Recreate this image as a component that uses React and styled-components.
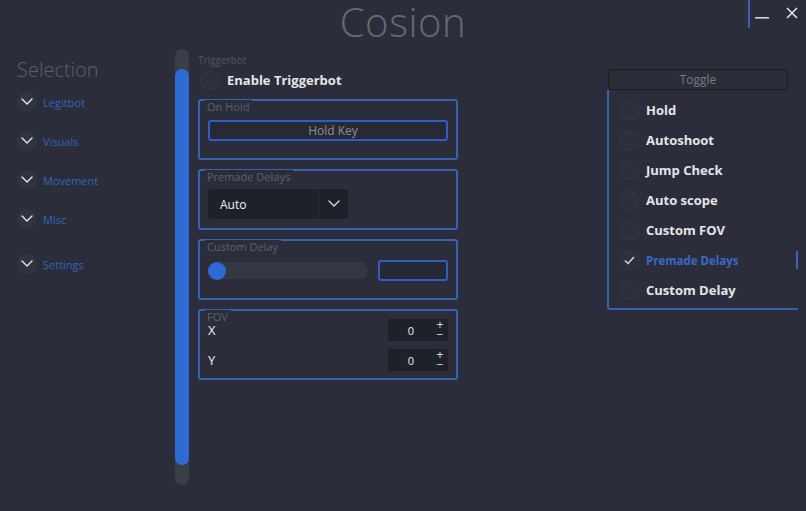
import React, { useState } from 'react';
import styled, { createGlobalStyle } from 'styled-components';

const GlobalStyle = createGlobalStyle`
  html, body {
    margin: 0;
    padding: 0;
    background: #2b2e3a;
  }
  body {
    font-family: "Open Sans", "Noto Sans", sans-serif;
  }
`;

const Window = styled.div`
  width: 806px;
  height: 511px;
  background: #2b2e3a;
  display: flex;
  flex-direction: column;
  overflow: hidden;
`;

const TitleBar = styled.div`
  height: 50px;
  display: grid;
  grid-template-columns: 1fr auto 1fr;
`;

const Title = styled.h1`
  grid-column: 2;
  margin: 0;
  padding-top: 1px;
  font-size: 40px;
  font-weight: 300;
  line-height: 42px;
  color: #646977;
  letter-spacing: 0.6px;
`;

const Controls = styled.div`
  grid-column: 3;
  justify-self: end;
  display: flex;
  align-items: flex-start;
  height: 28px;
  padding-right: 8px;
`;

const ControlDivider = styled.span`
  width: 2px;
  height: 28px;
  background: #3c62b4;
`;

const ControlButton = styled.button`
  border: 0;
  background: transparent;
  padding: 0;
  margin-left: ${(p) => p.$gap}px;
  margin-top: ${(p) => p.$top}px;
  width: ${(p) => p.$size}px;
  height: ${(p) => p.$size}px;
  display: flex;
  cursor: pointer;
`;

const Body = styled.div`
  flex: 1;
  display: flex;
  align-items: flex-start;
`;

const Sidebar = styled.nav`
  width: 175px;
  padding: 7px 0 0 17px;
  box-sizing: border-box;
`;

const SidebarTitle = styled.div`
  font-size: 20px;
  font-weight: 300;
  line-height: 25px;
  color: #5a5f6c;
  margin-bottom: 10px;
`;

const NavList = styled.div`
  display: flex;
  flex-direction: column;
`;

const NavItem = styled.a`
  display: flex;
  align-items: center;
  gap: 6px;
  height: 20px;
  margin-bottom: ${(p) => p.$space}px;
  cursor: pointer;
`;

const NavCircle = styled.span`
  width: 20px;
  height: 20px;
  border-radius: 50%;
  background: #30343f;
  display: flex;
  align-items: center;
  justify-content: center;
`;

const NavText = styled.span`
  font-size: 11px;
  color: #3562b8;
`;

const ScrollTrack = styled.div`
  width: 14px;
  height: 436px;
  margin-top: -1px;
  border-radius: 7px;
  background: #3a3e49;
  padding: 20px 0;
  box-sizing: border-box;
  display: flex;
`;

const ScrollThumb = styled.div`
  flex: 1;
  border-radius: 7px;
  background: #2e6bd3;
`;

const Content = styled.section`
  width: 260px;
  margin-left: 9px;
  display: flex;
  flex-direction: column;
`;

const SectionLabel = styled.div`
  font-size: 10px;
  line-height: 12px;
  color: #4f5461;
  margin-top: 4px;
`;

const EnableRow = styled.label`
  display: flex;
  align-items: center;
  gap: 8px;
  height: 20px;
  margin: 4px 0 9px 2px;
  cursor: pointer;
`;

const RadioCircle = styled.span`
  width: 17px;
  height: 17px;
  border-radius: 50%;
  border: 1px solid #363a46;
  background: #2d303c;
  flex-shrink: 0;
  display: flex;
  align-items: center;
  justify-content: center;
`;

const BoldText = styled.span`
  font-weight: 700;
  color: ${(p) => (p.$active ? '#3a68c8' : '#e4e5e8')};
  font-size: ${(p) => (p.$active ? '11.5px' : '13px')};
`;

const GroupBox = styled.fieldset`
  margin: 0 0 9px;
  padding: 0 8px;
  height: ${(p) => p.$height}px;
  box-sizing: border-box;
  border: 2px solid #3761b3;
  border-radius: 3px;
  display: flex;
  flex-direction: column;
  min-width: 0;
`;

const GroupLabel = styled.div`
  align-self: flex-start;
  margin: -1px 0 0 -3px;
  padding: 0 3px 0 2px;
  background: #2b2e3a;
  font-size: 11px;
  line-height: 13px;
  color: #5c616e;
`;

const KeyButton = styled.button`
  margin-top: 7px;
  height: 21px;
  border: 2px solid #2f5fc6;
  border-radius: 3px;
  background: #272a35;
  color: #8a8e99;
  font-family: inherit;
  font-size: 12px;
  padding: 0 0 0 10px;
`;

const Select = styled.div`
  margin-top: 6px;
  width: 140px;
  height: 30px;
  border-radius: 4px;
  background: #1f2129;
  display: flex;
  align-items: center;
`;

const SelectValue = styled.span`
  flex: 1;
  padding-left: 12px;
  font-size: 12px;
  color: #eceef2;
`;

const SelectArrow = styled.span`
  width: 29px;
  height: 30px;
  border-left: 1px solid #2c2f39;
  display: flex;
  align-items: center;
  justify-content: center;
`;

const SliderRow = styled.div`
  margin-top: 7px;
  display: flex;
  align-items: center;
  gap: 10px;
`;

const SliderTrack = styled.div`
  width: 161px;
  height: 17px;
  border-radius: 9px;
  background: #343843;
  display: flex;
  align-items: center;
`;

const SliderHandle = styled.span`
  width: 18px;
  height: 18px;
  border-radius: 50%;
  background: #2e6ad6;
`;

const ValueInput = styled.input`
  width: 70px;
  height: 21px;
  box-sizing: border-box;
  border: 2px solid #2f5fc6;
  border-radius: 3px;
  background: #262934;
  outline: none;
`;

const FovRow = styled.div`
  height: 30px;
  display: flex;
  align-items: center;
  justify-content: space-between;
  margin-top: ${(p) => p.$top || 0}px;
`;

const AxisLabel = styled.span`
  font-size: 13px;
  color: #eceef2;
`;

const SpinBox = styled.div`
  width: 60px;
  height: 22px;
  background: #1f2129;
  display: flex;
  align-items: center;
`;

const SpinValue = styled.span`
  flex: 1;
  text-align: center;
  font-size: 11px;
  color: #e8e9ec;
  padding-left: 2px;
`;

const SpinButtons = styled.span`
  width: 16px;
  display: flex;
  flex-direction: column;
  align-items: center;
  font-size: 12px;
  line-height: 10px;
  color: #dcdde0;
`;

const RightPanel = styled.aside`
  width: 191px;
  margin: 19px 0 0 149px;
  display: flex;
  flex-direction: column;
`;

const ToggleButton = styled.button`
  margin-left: 1px;
  width: 180px;
  height: 21px;
  border: 1px solid #1b1d24;
  border-radius: 2px;
  background: #2b2e39;
  color: #777b87;
  font-family: inherit;
  font-size: 12px;
  padding: 0;
`;

const OptionList = styled.div`
  height: 220px;
  box-sizing: border-box;
  border-left: 2px solid #3761b3;
  border-bottom: 2px solid #3761b3;
  border-bottom-left-radius: 3px;
  padding: 5px 0 0 11px;
  display: flex;
  flex-direction: column;
`;

const OptionRow = styled.label`
  height: 30px;
  display: flex;
  align-items: center;
  gap: 7px;
  cursor: pointer;
`;

const ActiveMark = styled.span`
  margin-left: auto;
  width: 2px;
  height: 18px;
  background: #3a64bd;
`;

const Chevron = ({ size = 12, color = '#e8e8ec' }) => (
  <svg width={size} height={size * 0.6} viewBox="0 0 12 7" fill="none">
    <path d="M1 1l5 5 5-5" stroke={color} strokeWidth="1.4" strokeLinecap="round" strokeLinejoin="round" />
  </svg>
);

const navItems = [
  { label: 'Legitbot', space: 19 },
  { label: 'Visuals', space: 19 },
  { label: 'Movement', space: 19 },
  { label: 'Misc', space: 25 },
  { label: 'Settings', space: 0 },
];

const options = [
  'Hold',
  'Autoshoot',
  'Jump Check',
  'Auto scope',
  'Custom FOV',
  'Premade Delays',
  'Custom Delay',
];

const Spinner = ({ value }) => (
  <SpinBox>
    <SpinValue>{value}</SpinValue>
    <SpinButtons>
      <span>+</span>
      <span>−</span>
    </SpinButtons>
  </SpinBox>
);

const App = () => {
  const [checked] = useState('Premade Delays');
  return (
    <>
      <GlobalStyle />
      <Window>
        <TitleBar>
          <Title>Cosion</Title>
          <Controls>
            <ControlDivider />
            <ControlButton $gap={5} $top={17} $size={14}>
              <svg width="14" height="3" viewBox="0 0 14 3">
                <rect x="0" y="0" width="14" height="1.6" fill="#d4d5d9" />
              </svg>
            </ControlButton>
            <ControlButton $gap={17} $top={7} $size={12}>
              <svg width="12" height="12" viewBox="0 0 12 12">
                <path d="M1 1l10 10M11 1L1 11" stroke="#e6e7ea" strokeWidth="1.5" />
              </svg>
            </ControlButton>
          </Controls>
        </TitleBar>
        <Body>
          <Sidebar>
            <SidebarTitle>Selection</SidebarTitle>
            <NavList>
              {navItems.map((item) => (
                <NavItem key={item.label} $space={item.space}>
                  <NavCircle>
                    <Chevron />
                  </NavCircle>
                  <NavText>{item.label}</NavText>
                </NavItem>
              ))}
            </NavList>
          </Sidebar>
          <ScrollTrack>
            <ScrollThumb />
          </ScrollTrack>
          <Content>
            <SectionLabel>Triggerbot</SectionLabel>
            <EnableRow>
              <RadioCircle />
              <BoldText>Enable Triggerbot</BoldText>
            </EnableRow>
            <GroupBox $height={61}>
              <GroupLabel>On Hold</GroupLabel>
              <KeyButton>Hold Key</KeyButton>
            </GroupBox>
            <GroupBox $height={61}>
              <GroupLabel>Premade Delays</GroupLabel>
              <Select>
                <SelectValue>Auto</SelectValue>
                <SelectArrow>
                  <Chevron size={12} color="#d8d9dd" />
                </SelectArrow>
              </Select>
            </GroupBox>
            <GroupBox $height={61}>
              <GroupLabel>Custom Delay</GroupLabel>
              <SliderRow>
                <SliderTrack>
                  <SliderHandle />
                </SliderTrack>
                <ValueInput />
              </SliderRow>
            </GroupBox>
            <GroupBox $height={71}>
              <GroupLabel>FOV</GroupLabel>
              <FovRow $top={-8}>
                <AxisLabel>X</AxisLabel>
                <Spinner value="0" />
              </FovRow>
              <FovRow>
                <AxisLabel>Y</AxisLabel>
                <Spinner value="0" />
              </FovRow>
            </GroupBox>
          </Content>
          <RightPanel>
            <ToggleButton>Toggle</ToggleButton>
            <OptionList>
              {options.map((opt) => (
                <OptionRow key={opt}>
                  <RadioCircle>
                    {checked === opt && (
                      <svg width="11" height="9" viewBox="0 0 11 9">
                        <path d="M1 4.5l3 3 6-6.5" stroke="#d9dade" strokeWidth="1.4" fill="none" />
                      </svg>
                    )}
                  </RadioCircle>
                  <BoldText $active={checked === opt}>{opt}</BoldText>
                  {checked === opt && <ActiveMark />}
                </OptionRow>
              ))}
            </OptionList>
          </RightPanel>
        </Body>
      </Window>
    </>
  );
};

export default App;
